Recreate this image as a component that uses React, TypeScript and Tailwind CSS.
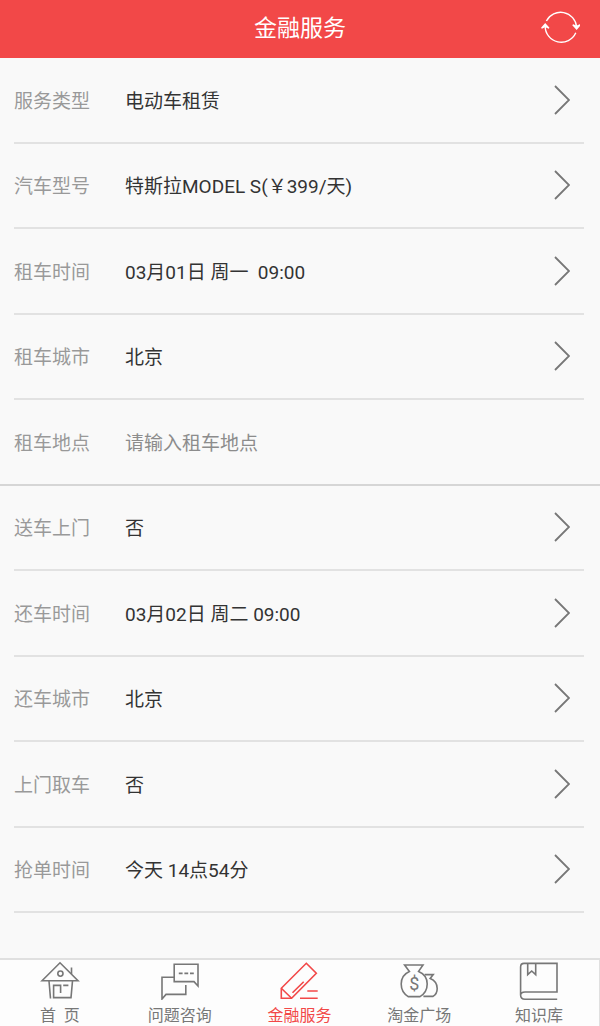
import React from 'react';

type Row = {
  label: string;
  value?: string;
  placeholder?: string;
  fullLine?: boolean;
};

const rows: Row[] = [
  { label: '服务类型', value: '电动车租赁' },
  { label: '汽车型号', value: '特斯拉MODEL S(￥399/天)' },
  { label: '租车时间', value: '03月01日 周一  09:00' },
  { label: '租车城市', value: '北京' },
  { label: '租车地点', placeholder: '请输入租车地点', fullLine: true },
  { label: '送车上门', value: '否' },
  { label: '还车时间', value: '03月02日 周二 09:00' },
  { label: '还车城市', value: '北京' },
  { label: '上门取车', value: '否' },
  { label: '抢单时间', value: '今天 14点54分' },
];

const RefreshIcon = () => (
  <svg viewBox="0 0 40 40" className="w-10 h-10" fill="none" stroke="currentColor" strokeWidth="1.4">
    <path d="M6.4 12A16 16 0 0 1 36.6 18" />
    <path d="M35.8 23.8A16 16 0 0 1 5.2 17" />
    <path d="M32.8 15.8L36.6 20L40 15.8L36.6 17.4Z" fill="currentColor" />
    <path d="M1.6 19.2L5.2 15L9 19.2L5.2 17.4Z" fill="currentColor" />
  </svg>
);

const Chevron = () => (
  <svg viewBox="0 0 16 30" className="w-4 h-[30px] shrink-0" fill="none" stroke="#777" strokeWidth="1.8">
    <path d="M1 1L15 15L1 29" />
  </svg>
);

const NavIcon = ({ children }: { children: React.ReactNode }) => (
  <svg viewBox="0 0 40 40" className="w-10 h-10" fill="none" stroke="currentColor" strokeWidth="1.6">
    {children}
  </svg>
);

const tabs = [
  {
    label: '首\u00a0\u00a0页',
    icon: (
      <NavIcon>
        <path d="M2 20.8L20 2.8L38 20.8Z" />
        <path d="M31.5 7.5V14" />
        <circle cx="20.4" cy="13.6" r="2.6" />
        <path d="M9 21L10.5 38.5M32.5 21L31 37.6H13.6V25.4H20.6V33M23.2 25.4H28.4" />
      </NavIcon>
    ),
  },
  {
    label: '问题咨询',
    icon: (
      <NavIcon>
        <path d="M14.2 4.3H38V26L34 21.6H14.2Z" />
        <path d="M18.8 13.4H22.6M24.4 13.4H28.2M30 13.4H33.8" />
        <path d="M14.2 17.3H2V39L6 34.4H25.8V25" />
      </NavIcon>
    ),
  },
  {
    label: '金融服务',
    active: true,
    icon: (
      <NavIcon>
        <path d="M27.3 3.3L37.3 13.3L12.6 38.3H2.3V28.3Z" />
        <path d="M2.3 28.3L12.6 38.3M13.5 32.7L24.7 21.7M28.3 31H38.7M21 38.3H38.7" />
      </NavIcon>
    ),
  },
  {
    label: '淘金广场',
    icon: (
      <NavIcon>
        <path d="M10.4 11.4L5.6 5H24L19.6 11.4C25 13.6 28.2 18.6 28.2 24C28.2 29 25.4 34 21 36.6H9.2C5 34 2.2 29 2.2 24C2.2 18.6 5.4 13.6 10.4 11.4Z" />
        <path d="M25.6 14.6H34.2L31.2 18.4C35.6 20.2 38.2 24 38.2 28.4C38.2 31.8 36.6 34.8 34 36.4H24.4" />
        <text
          x="15.4"
          y="30"
          textAnchor="middle"
          fontSize="18"
          fill="currentColor"
          stroke="none"
          fontFamily="Roboto, sans-serif"
        >
          $
        </text>
      </NavIcon>
    ),
  },
  {
    label: '知识库',
    icon: (
      <NavIcon>
        <path d="M38.2 39.2H6C3 39.2 1.6 37.4 1.6 35V7C1.6 4.8 3 3.4 5 3.4H38V32H6C3.4 32 1.6 33.4 1.6 35.6" />
        <path d="M8.7 3.4V14.6L12.7 11L16.7 14.6V3.4" />
      </NavIcon>
    ),
  },
];

const FormRow = ({ row }: { row: Row }) => {
  const line = row.fullLine ? 'border-b-2 border-[#d6d6d6] px-[14px]' : 'mr-4 ml-[14px] border-b-2 border-[#e2e2e2]';

  if (row.placeholder) {
    return (
      <div className={`flex min-h-16 items-center ${line}`}>
        <label htmlFor="place" className="w-[111px] shrink-0 pt-1 text-[#999]">
          {row.label}
        </label>
        <input
          id="place"
          type="text"
          placeholder={row.placeholder}
          className="min-w-0 flex-1 bg-transparent pt-1 text-[#333] outline-none placeholder:text-[#8c8c8c]"
        />
      </div>
    );
  }

  return (
    <button type="button" className={`flex min-h-16 items-center pr-[14px] text-left ${line}`}>
      <span className="w-[111px] shrink-0 pt-1 text-[#999]">{row.label}</span>
      <span className="flex-1 whitespace-pre pt-1 text-[#333]">{row.value}</span>
      <Chevron />
    </button>
  );
};

const App = () => {
  return (
    <div className="flex min-h-screen flex-col bg-[#f9f9f9] font-['Roboto','Noto_Sans_CJK_SC',sans-serif]">
      <header className="grid h-[58px] shrink-0 grid-cols-[1fr_auto_1fr] items-center bg-[#f24848] px-5 text-white">
        <h1 className="col-start-2 text-[23px] leading-8">金融服务</h1>
        <button type="button" aria-label="刷新" className="justify-self-end">
          <RefreshIcon />
        </button>
      </header>

      <main className="grid flex-1 auto-rows-fr pb-[45px] text-[19px] leading-7">
        {rows.map((row) => (
          <FormRow key={row.label} row={row} />
        ))}
      </main>

      <nav className="grid h-[68px] shrink-0 grid-cols-5 border-t-2 border-r border-[#e0e0e0] bg-[#fdfdfd]">
        {tabs.map((tab) => (
          <a
            key={tab.label}
            href="#"
            className={`flex flex-col items-center gap-1.5 text-[16px] leading-5 ${tab.active ? 'text-[#f24848]' : 'text-[#777]'}`}
          >
            {tab.icon}
            <span>{tab.label}</span>
          </a>
        ))}
      </nav>
    </div>
  );
};

export default App;
